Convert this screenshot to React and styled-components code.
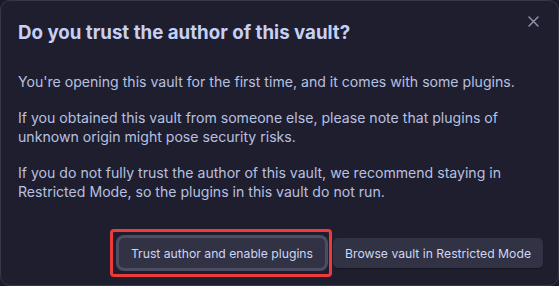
import React from "react";
import styled, { createGlobalStyle } from "styled-components";

const Global = createGlobalStyle`
  html, body { margin: 0; padding: 0; background: #1b1b28; }
  body { font-family: Inter, "Noto Sans", sans-serif; }
  * { box-sizing: border-box; }
`;

const Modal = styled.div`
  position: relative;
  width: 559px;
  height: 286px;
  background: #1e1e2e;
  border: 1px solid #36374a;
  border-radius: 10px;
  padding: 16px 15px 17px 17px;
  display: flex;
  flex-direction: column;
  color: #bac2de;
`;

const Close = styled.button`
  position: absolute;
  top: 10px;
  right: 15px;
  width: 20px;
  height: 20px;
  padding: 0;
  border: none;
  background: transparent;
  color: #9399b2;
  display: flex;
  align-items: center;
  justify-content: center;
`;

const Title = styled.h2`
  margin: 4px 0 0;
  font-size: 18.7px;
  line-height: 23px;
  font-weight: 700;
  color: #c6d0f5;
`;

const Content = styled.div`
  margin-top: 28px;
  display: flex;
  flex-direction: column;
  gap: 17px;
`;

const Para = styled.p`
  margin: 0;
  font-size: 14.1px;
  line-height: 19px;
  color: #b8c0e0;
`;

const Buttons = styled.div`
  margin-top: auto;
  display: flex;
  justify-content: flex-end;
  gap: 8px;
`;

const Button = styled.button`
  height: 30px;
  padding: 0 12px;
  border: none;
  border-radius: 5px;
  background: #313244;
  color: #cdd6f4;
  font-family: Inter, "Noto Sans", sans-serif;
  font-size: 12.2px;
  box-shadow: ${(p) => (p.$focused ? "0 0 0 3px #4c4d63" : "0 1px 1px rgba(0,0,0,0.3)")};
`;

const Highlight = styled.span`
  display: flex;
  padding: 6px 4px 6px 6px;
  margin: -9px -7px -9px -9px;
  border: 3px solid #ee3a3a;
  border-radius: 4px;
`;

export default function App() {
  return (
    <>
      <Global />
      <Modal>
        <Close aria-label="Close">
          <svg width="11" height="11" viewBox="0 0 11 11">
            <path d="M1 1 L10 10 M10 1 L1 10" stroke="currentColor" strokeWidth="1.4" strokeLinecap="round" />
          </svg>
        </Close>
        <Title>Do you trust the author of this vault?</Title>
        <Content>
          <Para>You're opening this vault for the first time, and it comes with some plugins.</Para>
          <Para>
            If you obtained this vault from someone else, please note that plugins of unknown origin might pose
            security risks.
          </Para>
          <Para>
            If you do not fully trust the author of this vault, we recommend staying in Restricted Mode, so the
            plugins in this vault do not run.
          </Para>
        </Content>
        <Buttons>
          <Highlight>
            <Button $focused>Trust author and enable plugins</Button>
          </Highlight>
          <Button>Browse vault in Restricted Mode</Button>
        </Buttons>
      </Modal>
    </>
  );
}
